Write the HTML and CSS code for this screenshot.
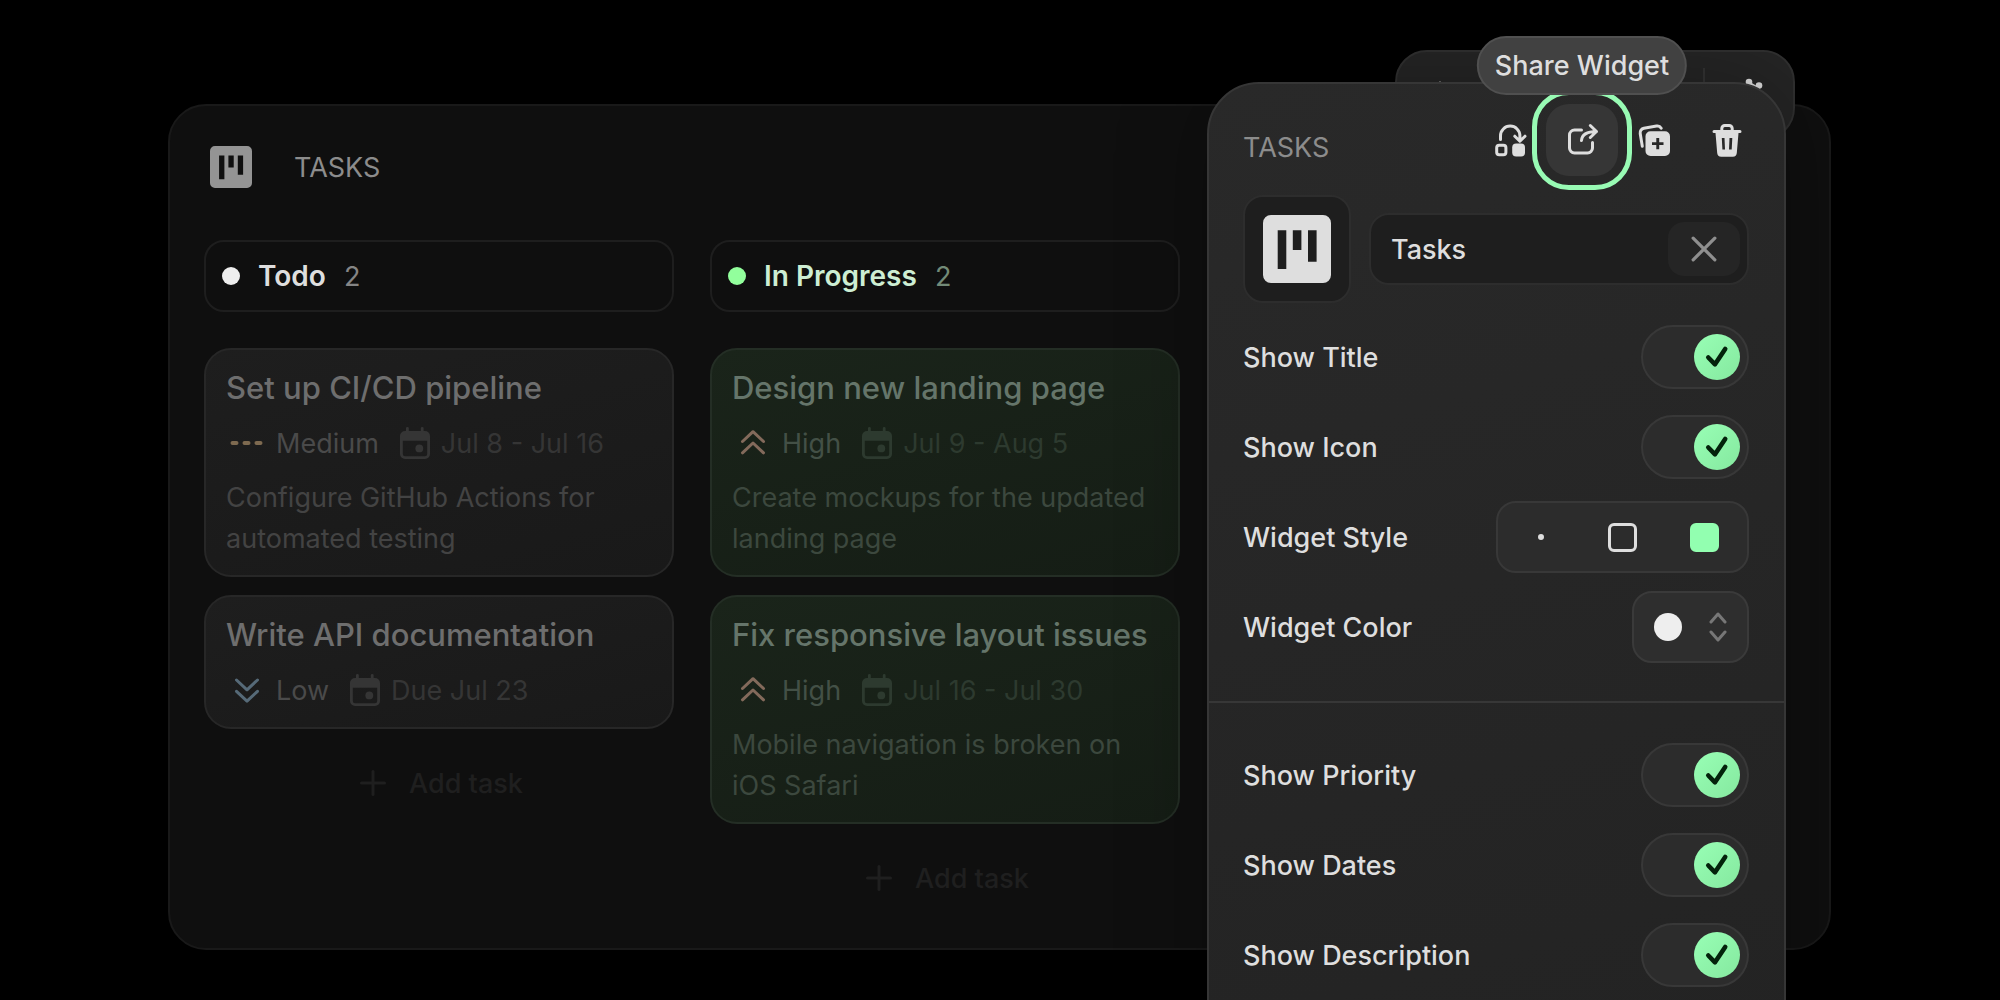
FILE: index.html
```html
<!DOCTYPE html>
<html lang="en">
  <head>
    <meta charset="utf-8" />
    <meta name="viewport" content="width=device-width, initial-scale=1" />
    <title>Tasks widget</title>
    <link rel="stylesheet" href="styles.css">
  </head>
  <body>
    <!-- Shared icons -->
    <svg class="sprite" aria-hidden="true">
      <symbol id="kanban" viewBox="0 0 68 68">
        <path fill="currentColor" fill-rule="evenodd" d="M8 0h52a8 8 0 0 1 8 8v52a8 8 0 0 1-8 8H8a8 8 0 0 1-8-8V8a8 8 0 0 1 8-8zM14.7 15.3V54h8.6V15.3zM29.8 15.3V35h8.6V15.3zM45 15.3v31.4h8.6V15.3z" />
      </symbol>
      <symbol id="calendar" viewBox="0 0 36 36">
        <path fill="currentColor" fill-rule="evenodd" d="M9 6V3.3a1.4 1.4 0 0 1 2.8 0V6h12V3.3a1.4 1.4 0 0 1 2.8 0V6H28a5 5 0 0 1 5 5v18a5 5 0 0 1-5 5H8a5 5 0 0 1-5-5V11a5 5 0 0 1 5-5zM5.8 15.8V29a2.2 2.2 0 0 0 2.2 2.2h20a2.2 2.2 0 0 0 2.2-2.2V15.8z" />
        <circle cx="22.3" cy="23.4" r="3.9" fill="currentColor" />
      </symbol>
      <symbol id="high" viewBox="0 0 42 36">
        <path class="line" d="M10.5 16.5 21 6.7l10.5 9.8M10.5 27.8 21 18l10.5 9.8" />
      </symbol>
      <symbol id="low" viewBox="0 0 42 36">
        <path class="line" d="M10.5 8 21 17.8 31.5 8M10.5 19.3 21 29.1l10.5-9.8" />
      </symbol>
      <symbol id="medium" viewBox="0 0 42 36">
        <path fill="none" stroke="currentColor" stroke-width="4" stroke-linecap="round" d="M6.5 18h4M18.5 18h4M30.5 18h4" />
      </symbol>
      <symbol id="plus" viewBox="0 0 36 36">
        <path class="line" d="M18 6.5v23M6.5 18h23" />
      </symbol>
      <symbol id="check" viewBox="0 0 46 46">
        <path fill="none" stroke="currentColor" stroke-width="4.6" stroke-linecap="round" stroke-linejoin="round" d="M14.3 23.5 21 30.3 31.2 15" />
      </symbol>
    </svg>

    <div class="page">
      <div class="stage">
        <!-- Floating toolbar, mostly under the settings panel -->
        <div class="toolbar">
          <button class="tool" type="button" aria-label="Move">
            <svg viewBox="0 0 36 36"><path fill="currentColor" d="m18 4 4 6h-3v5h-2v-5h-3z" /></svg>
          </button>
          <span class="tool-divider"></span>
          <button class="tool" type="button" aria-label="Tools">
            <svg viewBox="0 0 36 36" fill="currentColor"><circle cx="12" cy="5" r="3.3" /><circle cx="22" cy="8.5" r="3.3" /><path d="m14 5.500 5 3 4 2-1 12L9 12V6z" /></svg>
          </button>
        </div>

        <!-- Task board -->
        <main class="board">
          <header class="board-header">
            <span class="board-icon"><svg><use href="#kanban" /></svg></span>
            <h1 class="board-title">TASKS</h1>
          </header>

          <div class="columns">
            <section class="column">
              <h2 class="column-header"><span class="dot"></span>Todo <span class="count">2</span></h2>
              <div class="cards">
                <article class="card">
                  <h3 class="card-title">Set up CI/CD pipeline</h3>
                  <div class="meta">
                    <span class="priority"><svg class="medium"><use href="#medium" /></svg>Medium</span>
                    <span class="date"><svg><use href="#calendar" /></svg>Jul 8 - Jul 16</span>
                  </div>
                  <p class="desc">Configure GitHub Actions for automated testing</p>
                </article>
                <article class="card">
                  <h3 class="card-title">Write API documentation</h3>
                  <div class="meta">
                    <span class="priority"><svg class="low"><use href="#low" /></svg>Low</span>
                    <span class="date"><svg><use href="#calendar" /></svg>Due Jul 23</span>
                  </div>
                </article>
                <button class="add-task" type="button"><svg><use href="#plus" /></svg>Add task</button>
              </div>
            </section>

            <section class="column progress">
              <h2 class="column-header"><span class="dot"></span>In Progress <span class="count">2</span></h2>
              <div class="cards">
                <article class="card">
                  <h3 class="card-title">Design new landing page</h3>
                  <div class="meta">
                    <span class="priority"><svg class="high"><use href="#high" /></svg>High</span>
                    <span class="date"><svg><use href="#calendar" /></svg>Jul 9 - Aug 5</span>
                  </div>
                  <p class="desc">Create mockups for the updated landing page</p>
                </article>
                <article class="card">
                  <h3 class="card-title">Fix responsive layout issues</h3>
                  <div class="meta">
                    <span class="priority"><svg class="high"><use href="#high" /></svg>High</span>
                    <span class="date"><svg><use href="#calendar" /></svg>Jul 16 - Jul 30</span>
                  </div>
                  <p class="desc">Mobile navigation is broken on iOS Safari</p>
                </article>
                <button class="add-task" type="button"><svg><use href="#plus" /></svg>Add task</button>
              </div>
            </section>
          </div>
        </main>

        <!-- Widget settings panel -->
        <aside class="panel">
          <header class="panel-header">
            <h2 class="panel-title">TASKS</h2>
            <div class="actions">
              <button class="action" type="button" aria-label="Replace Widget">
                <svg viewBox="0 0 36 36">
                  <path class="line" d="M8.5 17.5V13.8a9.7 9.7 0 0 1 19.4 0V19M22.8 14.2l5.1 5.1 5.1-5.1" />
                  <rect class="line" x="4.7" y="23.3" width="9.2" height="9.4" rx="2.5" />
                  <rect x="20.2" y="21.5" width="12.8" height="13" rx="4" fill="currentColor" />
                </svg>
              </button>
              <div class="tip-wrap">
                <button class="action active" type="button" aria-describedby="share-tip" aria-label="Share Widget">
                  <svg viewBox="0 0 36 36">
                    <path class="line" d="M17.5 8H10.5a5 5 0 0 0-5 5v13a5 5 0 0 0 5 5h13a5 5 0 0 0 5-5v-5.5M17.5 18.5c.5-6 5-9 15-9M26.3 3.5l6.2 6-6.2 6" />
                  </svg>
                </button>
                <span class="tooltip" id="share-tip" role="tooltip">Share Widget</span>
              </div>
              <button class="action" type="button" aria-label="Duplicate Widget">
                <svg viewBox="0 0 36 36">
                  <path class="line" d="M6.3 24.3 4.2 11.5a4.5 4.5 0 0 1 3.7-5.2L20.5 4.1a4.5 4.5 0 0 1 4.7 2.1" />
                  <path fill="currentColor" fill-rule="evenodd" d="M14.5 9.2H29a5 5 0 0 1 5 5V29a5 5 0 0 1-5 5H14.5a5 5 0 0 1-5-5V14.2a5 5 0 0 1 5-5zM20.3 16v4.2H16V23h4.3v4.3h2.9V23h4.3v-2.8h-4.3V16z" />
                </svg>
              </button>
              <button class="action" type="button" aria-label="Delete Widget">
                <svg viewBox="0 0 36 36">
                  <path class="line" d="M6 9.5h26M13.8 9V6.5A3 3 0 0 1 16.8 3.5h4.4a3 3 0 0 1 3 3V9" />
                  <path fill="currentColor" fill-rule="evenodd" d="M7.5 11h23l-1.7 20a4 4 0 0 1-4 3.7H13.2a4 4 0 0 1-4-3.7zM13.8 16l.6 11.5H17L16.5 16zM21.5 16 21 27.5h2.7l.6-11.5z" />
                </svg>
              </button>
            </div>
          </header>

          <div class="identity">
            <button class="icon-tile" type="button" aria-label="Widget icon"><svg><use href="#kanban" /></svg></button>
            <div class="name-field">
              <input type="text" value="Tasks" aria-label="Widget name" />
              <button class="clear" type="button" aria-label="Clear">
                <svg viewBox="0 0 24 24"><path class="line" d="m2 2 20 20M22 2 2 22" /></svg>
              </button>
            </div>
          </div>

          <div class="settings">
            <div class="setting">
              <label for="show-title">Show Title</label>
              <span class="switch"><input type="checkbox" id="show-title" checked /><svg><use href="#check" /></svg></span>
            </div>
            <div class="setting">
              <label for="show-icon">Show Icon</label>
              <span class="switch"><input type="checkbox" id="show-icon" checked /><svg><use href="#check" /></svg></span>
            </div>
            <div class="setting" role="radiogroup" aria-labelledby="style-label">
              <span id="style-label">Widget Style</span>
              <div class="segmented">
                <input class="style-dot" type="radio" name="style" aria-label="Minimal" />
                <input class="style-outline" type="radio" name="style" aria-label="Outline" />
                <input class="style-filled" type="radio" name="style" aria-label="Filled" checked />
              </div>
            </div>
            <div class="setting">
              <label for="color">Widget Color</label>
              <span class="color-picker">
                <select id="color"><option aria-label="White"></option></select>
                <span class="swatch"></span>
                <svg viewBox="0 0 18 30"><path class="line" d="m2 10 7-8 7 8M2 20l7 8 7-8" /></svg>
              </span>
            </div>
          </div>

          <div class="settings">
            <div class="setting">
              <label for="show-priority">Show Priority</label>
              <span class="switch"><input type="checkbox" id="show-priority" checked /><svg><use href="#check" /></svg></span>
            </div>
            <div class="setting">
              <label for="show-dates">Show Dates</label>
              <span class="switch"><input type="checkbox" id="show-dates" checked /><svg><use href="#check" /></svg></span>
            </div>
            <div class="setting">
              <label for="show-description">Show Description</label>
              <span class="switch"><input type="checkbox" id="show-description" checked /><svg><use href="#check" /></svg></span>
            </div>
          </div>
        </aside>
      </div>
    </div>
  </body>
</html>
```

FILE: styles.css
```css
*,
*::before {
  box-sizing: border-box;
}

body {
  margin: 0;
  background: #000;
  color: #dedede;
  font-family: Inter, sans-serif;
  font-size: 27px;
  line-height: 41px;
}

h1,
h2,
h3,
p {
  margin: 0;
  font-size: 27px;
  font-weight: 400;
}

button,
input,
select {
  margin: 0;
  padding: 0;
  border: 0;
  background: none;
  color: inherit;
  font: inherit;
}

svg {
  display: block;
  flex: none;
}

.sprite {
  position: absolute;
  width: 0;
  height: 0;
}

.line {
  fill: none;
  stroke: currentColor;
  stroke-width: 3;
  stroke-linecap: round;
  stroke-linejoin: round;
}

.page {
  height: 100vh;
  padding: 104px 169px 0 168px;
  overflow: hidden;
}

.stage {
  position: relative;
}

/* Toolbar */
.toolbar {
  position: absolute;
  top: -54px;
  right: 36px;
  z-index: 1;
  display: flex;
  align-items: center;
  width: 400px;
  height: 90px;
  padding: 0 2px 0 7px;
  background: #252525;
  border: 2px solid #303030;
  border-radius: 32px;
}

.tool {
  display: flex;
  align-items: center;
  justify-content: center;
  width: 72px;
  height: 54px;
}

.tool svg {
  width: 36px;
  height: 36px;
}

.tool-divider {
  width: 2px;
  height: 54px;
  margin-left: auto;
  margin-right: 14px;
  background: #333;
}

/* Board */
.board {
  padding: 34px;
  background: #0f0f0f;
  border: 2px solid #191919;
  border-radius: 38px;
}

.board-header {
  display: flex;
  align-items: center;
  gap: 36px;
  margin-bottom: 46px;
  color: #8c8c8c;
}

.board-icon {
  display: grid;
  place-items: center;
  width: 54px;
  height: 54px;
  color: #949494;
}

.board-icon svg {
  width: 42px;
  height: 42px;
}

.columns {
  display: flex;
  align-items: flex-start;
  gap: 36px;
}

.column {
  flex: 0 0 470px;
}

.column-header {
  display: flex;
  align-items: center;
  gap: 18px;
  height: 72px;
  margin-bottom: 36px;
  padding: 0 16px;
  border: 2px solid #1e1e1e;
  border-radius: 20px;
  font-size: 28px;
  font-weight: 600;
}

.dot {
  width: 18px;
  height: 18px;
  border-radius: 50%;
  background: #eee;
}

.count {
  color: #858585;
  font-size: 27px;
  font-weight: 400;
}

.cards {
  display: flex;
  flex-direction: column;
  gap: 18px;
}

.card {
  display: flex;
  flex-direction: column;
  gap: 13px;
  padding: 16px 20px;
  background: linear-gradient(165deg, #1e1e1e, #191919);
  border: 2px solid #272727;
  border-radius: 27px;
  color: #434343;
}

.card-title {
  color: #6e6e6e;
  font-size: 31px;
  font-weight: 500;
  line-height: 43px;
}

.meta {
  display: flex;
  align-items: center;
  gap: 18px;
  height: 42px;
}

.priority,
.date {
  display: flex;
  align-items: center;
  gap: 8px;
}

.priority {
  color: #4a4a4a;
}

.priority svg {
  width: 42px;
  height: 36px;
}

.medium {
  color: #7e6a50;
}

.low {
  color: #566a78;
}

.high {
  color: #836a5b;
}

.date {
  color: #353535;
}

.date svg {
  width: 36px;
  height: 36px;
}

.add-task {
  display: flex;
  align-items: center;
  justify-content: center;
  gap: 18px;
  height: 72px;
  color: #1f1f1f;
  font-weight: 500;
}

.add-task svg {
  width: 36px;
  height: 36px;
}

/* Green column */
.progress .column-header {
  color: #cdeed3;
}

.progress .dot {
  background: #92ff9c;
}

.progress .count {
  color: #728a77;
}

.progress .card {
  background: linear-gradient(165deg, #1a241a, #151d15);
  border-color: #242e25;
  color: #3c483e;
}

.progress .card-title {
  color: #65756a;
}

.progress .priority {
  color: #435046;
}

.progress .date {
  color: #2d3a2f;
}

/* Settings panel */
.panel {
  position: absolute;
  top: -22px;
  right: 45px;
  z-index: 2;
  width: 579px;
  padding-bottom: 36px;
  background: linear-gradient(165deg, #292929, #232323);
  border: 2px solid #363636;
  border-radius: 52px;
  box-shadow: 0 0 90px rgba(0, 0, 0, 0.3);
  font-weight: 500;
}

.panel-header {
  display: flex;
  align-items: center;
  justify-content: space-between;
  padding: 20px 22px 0 34px;
}

.panel-title {
  padding-top: 14px;
  color: #8c8c8c;
}

.actions {
  display: flex;
}

.action {
  display: grid;
  place-items: center;
  width: 72px;
  height: 72px;
  border-radius: 23px;
}

.action svg {
  width: 36px;
  height: 36px;
}

.action.active {
  background: #363636;
  outline: 5px solid #98fbb4;
  outline-offset: 9px;
}

.tip-wrap {
  position: relative;
}

.tooltip {
  position: absolute;
  bottom: calc(100% + 9px);
  left: 50%;
  padding: 7px 16px;
  transform: translateX(-50%);
  background: #414141;
  border: 2px solid #505050;
  border-radius: 30px;
  white-space: nowrap;
}

.identity {
  display: flex;
  align-items: center;
  gap: 18px;
  padding: 19px 35px 18px 34px;
}

.icon-tile {
  display: grid;
  flex: none;
  place-items: center;
  width: 108px;
  height: 108px;
  background: #1e1e1e;
  border: 2px solid #2d2d2d;
  border-radius: 20px;
}

.icon-tile svg {
  width: 68px;
  height: 68px;
}

.name-field {
  display: flex;
  flex: 1;
  align-items: center;
  min-width: 0;
  height: 72px;
  padding: 0 7px 0 20px;
  background: #1e1e1e;
  border: 2px solid #2d2d2d;
  border-radius: 20px;
}

.name-field input {
  flex: 1;
  width: 100%;
  min-width: 0;
}

.clear {
  display: grid;
  flex: none;
  place-items: center;
  width: 72px;
  height: 54px;
  background: #252525;
  border-radius: 16px;
  color: #8f8f8f;
}

.clear svg {
  width: 26px;
  height: 26px;
}

.settings {
  display: flex;
  flex-direction: column;
  gap: 18px;
  padding: 0 35px 38px 34px;
}

.settings + .settings {
  padding-top: 36px;
  border-top: 2px solid #373737;
}

.setting {
  display: flex;
  align-items: center;
  justify-content: space-between;
  height: 72px;
}

/* Switch */
.switch {
  display: grid;
  align-items: center;
  justify-items: end;
}

.switch input,
.switch svg {
  grid-area: 1 / 1;
}

.switch input {
  display: flex;
  align-items: center;
  justify-content: flex-end;
  width: 108px;
  height: 64px;
  padding: 0 7px;
  appearance: none;
  background: #2c2c2c;
  border: 2px solid #383838;
  border-radius: 32px;
}

.switch input::before {
  content: "";
  width: 46px;
  height: 46px;
  border-radius: 50%;
  background: linear-gradient(135deg, #98ffb5, #85e89f);
}

.switch input:not(:checked) {
  justify-content: flex-start;
}

.switch input:not(:checked) + svg {
  display: none;
}

.switch svg {
  width: 46px;
  height: 46px;
  margin-right: 9px;
  color: #03230b;
  pointer-events: none;
}

/* Style picker */
.segmented {
  display: flex;
  width: 253px;
  height: 72px;
  padding: 0 2px;
  background: #2c2c2c;
  border: 2px solid #383838;
  border-radius: 20px;
}

.segmented input {
  display: grid;
  flex: 1;
  place-items: center;
  appearance: none;
}

.segmented input::before {
  content: "";
  width: 29px;
  height: 29px;
  border: 3px solid currentColor;
  border-radius: 6px;
}

.segmented .style-dot::before {
  width: 6px;
  height: 6px;
  border-radius: 50%;
}

.segmented .style-filled::before {
  background: currentColor;
}

.segmented input:checked {
  color: #92ffb0;
}

/* Color drop-down */
.color-picker {
  position: relative;
  display: grid;
  grid-template-columns: 28px 18px;
  align-items: center;
  justify-content: space-between;
  width: 117px;
  height: 72px;
  padding: 0 22px;
}

.color-picker select {
  position: absolute;
  inset: 0;
  width: 100%;
  appearance: none;
  background: #2e2e2e;
  border: 2px solid #3a3a3a;
  border-radius: 20px;
}

.color-picker svg,
.swatch {
  z-index: 1;
  pointer-events: none;
}

.swatch {
  width: 28px;
  height: 28px;
  border-radius: 50%;
  background: #eee;
}

.color-picker svg {
  width: 18px;
  height: 30px;
  color: #777;
}
```
